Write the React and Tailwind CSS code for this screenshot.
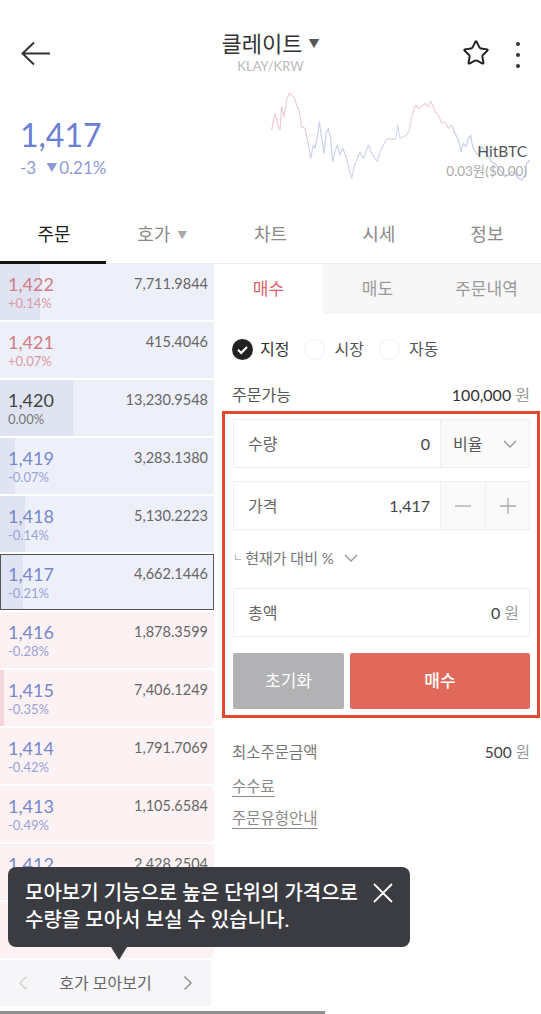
import { Star } from 'lucide-react';

const asks = [
  { price: '1,422', rate: '+0.14%', vol: '7,711.9844', tone: 'up', bar: 40 },
  { price: '1,421', rate: '+0.07%', vol: '415.4046', tone: 'up', bar: 0 },
  { price: '1,420', rate: '0.00%', vol: '13,230.9548', tone: 'flat', bar: 73 },
  { price: '1,419', rate: '-0.07%', vol: '3,283.1380', tone: 'down', bar: 15 },
  { price: '1,418', rate: '-0.14%', vol: '5,130.2223', tone: 'down', bar: 25 },
  { price: '1,417', rate: '-0.21%', vol: '4,662.1446', tone: 'down', bar: 23, current: true },
];

const bids = [
  { price: '1,416', rate: '-0.28%', vol: '1,878.3599', tone: 'down', bar: 0 },
  { price: '1,415', rate: '-0.35%', vol: '7,406.1249', tone: 'down', bar: 4 },
  { price: '1,414', rate: '-0.42%', vol: '1,791.7069', tone: 'down', bar: 0 },
  { price: '1,413', rate: '-0.49%', vol: '1,105.6584', tone: 'down', bar: 0 },
  { price: '1,412', rate: '-0.56%', vol: '2,428.2504', tone: 'down', bar: 0 },
  { price: '1,411', rate: '-0.64%', vol: '986.1120', tone: 'down', bar: 0 },
];

const toneText = {
  up: ['text-[#d27c86]', 'text-[#dc9aa2]'],
  flat: ['text-[#444]', 'text-[#777]'],
  down: ['text-[#7787cc]', 'text-[#97a2d7]'],
};

const chartPoints =
  '35,150 45,100 55,140 60,150 65,80 72,110 80,60 88,40 95,45 103,55 110,75 118,95 125,140 135,145 145,190 152,235 160,195 165,205 172,170 178,125 185,175 192,220 198,160 205,145 212,175 218,245 225,215 232,195 240,225 248,205 258,230 268,270 275,295 283,260 292,235 300,215 310,235 318,215 325,195 335,220 345,235 352,245 360,215 368,200 378,180 388,175 398,178 408,175 413,135 420,175 430,170 440,165 448,150 456,110 462,85 468,75 475,85 485,80 495,70 505,80 512,65 518,75 525,95 535,105 545,130 555,125 565,145 575,135 585,160 595,180 603,215 610,190 618,200 625,175 632,165 638,200 645,215 655,225 665,200 675,215 685,230 695,245 705,250 715,265 725,275 735,290 745,285 755,275 765,280 775,295 785,300 795,285 800,250 810,240';

function Chevron({ className = '' }) {
  return (
    <svg className={className} width="14" height="8" viewBox="0 0 14 8" fill="none">
      <path d="M1 1l6 6 6-6" stroke="currentColor" strokeWidth="1.4" />
    </svg>
  );
}

function BookRow({ row, side }) {
  const bg = side === 'ask' ? 'bg-[#eef0f9]' : 'bg-[#fcf2f3]';
  const barBg = side === 'ask' ? 'bg-[#e0e4f2]' : 'bg-[#f4d6da]';
  const [priceColor, rateColor] = toneText[row.tone];
  return (
    <div className={`relative h-[58px] border-b-2 border-white ${bg}`}>
      {row.bar > 0 && <div className={`absolute left-0 top-0 bottom-0 ${barBg}`} style={{ width: row.bar }} />}
      <div className="relative flex justify-between pl-[8px] pr-[6px] pt-[9px]">
        <div>
          <div className={`text-[18px] leading-[22px] ${priceColor}`}>{row.price}</div>
          <div className={`text-[13px] leading-[16px] ${rateColor}`}>{row.rate}</div>
        </div>
        <div className="text-[14.5px] leading-[22px] text-[#666]">{row.vol}</div>
      </div>
      {row.current && <div className="absolute inset-0 border border-[#555]" />}
    </div>
  );
}

function Field({ label, children, value }) {
  return (
    <div className="flex h-[49px] border border-[#efefef] bg-white">
      <div className="flex flex-1 items-center justify-between pl-[14px] pr-[10px]">
        <span className="text-[16px] text-[#666]">{label}</span>
        {value}
      </div>
      {children}
    </div>
  );
}

export default function App() {
  return (
    <div className="relative h-[1014px] w-[541px] overflow-hidden bg-white font-['Lato','Noto_Sans_CJK_KR',sans-serif] text-[#333]">
      {/* header */}
      <div className="flex h-[90px] items-start justify-between px-[21px]">
        <div className="w-[100px] pt-[41px]">
          <svg width="30" height="25" viewBox="0 0 30 25" fill="none">
            <path d="M1.5 12.5H29M13 1.5L1.5 12.5 13 23.5" stroke="#333" strokeWidth="2" />
          </svg>
        </div>
        <div className="flex flex-col items-center pt-[30px]">
          <div className="flex items-center text-[22px] leading-[28px] text-[#333]">
            클레이트
            <span className="ml-[6px] text-[11px] text-[#555]">▼</span>
          </div>
          <div className="text-[13px] leading-[16px] text-[#bbb]">KLAY/KRW</div>
        </div>
        <div className="flex w-[100px] items-start justify-end gap-[26px] pt-[39px]">
          <Star size={28} strokeWidth={1.7} color="#222" />
          <div className="flex flex-col items-center gap-[7px] pt-[3px]">
            <span className="h-[4px] w-[4px] rounded-full bg-[#333]" />
            <span className="h-[4px] w-[4px] rounded-full bg-[#333]" />
            <span className="h-[4px] w-[4px] rounded-full bg-[#333]" />
          </div>
        </div>
      </div>

      {/* price + chart */}
      <div className="flex h-[110px]">
        <div className="pl-[20px] pt-[25px]">
          <div className="text-[32px] leading-[40px] text-[#6b80d4]">1,417</div>
          <div className="mt-[2px] flex items-center text-[17px] leading-[22px] text-[#8e9ad6]">
            <span>-3</span>
            <span className="ml-[10px] mr-[2px] text-[11px]">▼</span>
            <span>0.21%</span>
          </div>
        </div>
        <div className="relative ml-auto h-[110px] w-[281px]">
          <svg width="281" height="100" viewBox="0 30 843 300" fill="none">
            <defs>
              <linearGradient id="cg" x1="0" y1="0" x2="843" y2="0" gradientUnits="userSpaceOnUse">
                <stop offset="0" stopColor="#f0c6ce" />
                <stop offset="0.15" stopColor="#efccd4" />
                <stop offset="0.19" stopColor="#c8ceec" />
                <stop offset="0.5" stopColor="#d6daf0" />
                <stop offset="0.55" stopColor="#f0cdd4" />
                <stop offset="0.66" stopColor="#eed2d9" />
                <stop offset="0.7" stopColor="#c6cceb" />
                <stop offset="1" stopColor="#c2c8ea" />
              </linearGradient>
            </defs>
            <polyline points={chartPoints} stroke="url(#cg)" strokeWidth="3.5" strokeLinejoin="round" />
          </svg>
          <div className="absolute right-[14px] top-[52px] text-right">
            <div className="text-[15.5px] leading-[19px] text-[#555]">HitBTC</div>
            <div className="mt-[1px] text-[13.5px] leading-[18px] text-[#aaa]">0.03원($0.00)</div>
          </div>
        </div>
      </div>

      {/* main tabs */}
      <div className="grid h-[64px] grid-cols-5 border-b border-[#eeeeee]">
        {['주문', '호가', '차트', '시세', '정보'].map((t, i) => (
          <div key={t} className="relative flex justify-center pt-[22px]">
            <span className={`text-[18px] leading-[24px] ${i === 0 ? 'text-[#222]' : 'text-[#8a8a8a]'}`}>
              {t}
              {i === 1 && <span className="ml-[7px] align-[2px] text-[10px] text-[#aaa]">▼</span>}
            </span>
            {i === 0 && <div className="absolute bottom-[-1px] left-0 h-[3px] w-[106px] bg-[#111]" />}
          </div>
        ))}
      </div>

      {/* body */}
      <div className="flex">
        <div className="w-[214px]">
          {asks.map((r) => (
            <BookRow key={r.price} row={r} side="ask" />
          ))}
          {bids.map((r) => (
            <BookRow key={r.price} row={r} side="bid" />
          ))}
          <div className="flex h-[46px] w-[211px] items-center justify-between bg-[#f6f6f8] px-[18px]">
            <svg width="10" height="16" viewBox="0 0 10 16" fill="none">
              <path d="M8.5 1.5L2 8l6.5 6.5" stroke="#d0d0d0" strokeWidth="1.4" />
            </svg>
            <span className="text-[16px] text-[#666]">호가 모아보기</span>
            <svg width="10" height="16" viewBox="0 0 10 16" fill="none">
              <path d="M1.5 1.5L8 8l-6.5 6.5" stroke="#888" strokeWidth="1.4" />
            </svg>
          </div>
        </div>

        <div className="flex-1">
          <div className="grid h-[50px] grid-cols-3 bg-[#f7f7f8] text-[17px]">
            <div className="flex items-center justify-center bg-white text-[#d9646c]">매수</div>
            <div className="flex items-center justify-center text-[#9a9a9a]">매도</div>
            <div className="flex items-center justify-center text-[#9a9a9a]">주문내역</div>
          </div>

          <div className="mt-[25px] flex h-[20px] items-center pl-[18px] text-[16px]">
            <svg width="21" height="21" viewBox="0 0 21 21">
              <circle cx="10.5" cy="10.5" r="10.5" fill="#222" />
              <path d="M6 10.8l3.2 3.2 5.8-6" stroke="#fff" strokeWidth="2" fill="none" />
            </svg>
            <span className="ml-[7px] text-[#333]">지정</span>
            <span className="ml-[15px] h-[21px] w-[21px] rounded-full border border-[#f1f1f1]" />
            <span className="ml-[9px] text-[#555]">시장</span>
            <span className="ml-[15px] h-[21px] w-[21px] rounded-full border border-[#f1f1f1]" />
            <span className="ml-[9px] text-[#555]">자동</span>
          </div>

          <div className="mt-[25px] flex h-[22px] items-center justify-between pl-[18px] pr-[11px] text-[16px]">
            <span className="text-[#555]">주문가능</span>
            <span className="text-[#333]">
              100,000 <span className="text-[#999]">원</span>
            </span>
          </div>

          <div className="ml-[8px] mr-[1px] mt-[5px] border-[3px] border-[#e4472f] pb-[6px] pl-[8px] pr-[7px] pt-[5px]">
            <Field label="수량" value={<span className="text-[16px] text-[#444]">0</span>}>
              <div className="flex w-[89px] items-center justify-between border-l border-[#efefef] bg-[#fafafa] pl-[12px] pr-[12px]">
                <span className="text-[16px] text-[#555]">비율</span>
                <Chevron className="text-[#999]" />
              </div>
            </Field>

            <div className="mt-[13px]">
              <Field label="가격" value={<span className="text-[16px] text-[#444]">1,417</span>}>
                <div className="flex w-[45px] items-center justify-center border-l border-[#efefef] bg-[#fafafa]">
                  <svg width="16" height="2" viewBox="0 0 16 2">
                    <path d="M0 1h16" stroke="#aaa" strokeWidth="1.3" />
                  </svg>
                </div>
                <div className="flex w-[44px] items-center justify-center border-l border-[#efefef] bg-[#fafafa]">
                  <svg width="16" height="16" viewBox="0 0 16 16">
                    <path d="M0 8h16M8 0v16" stroke="#aaa" strokeWidth="1.3" />
                  </svg>
                </div>
              </Field>
            </div>

            <div className="mt-[18px] flex h-[20px] items-center text-[15px] text-[#777]">
              <span className="mr-[2px] text-[11px] text-[#aaa]">ㄴ</span>
              현재가 대비 %
              <Chevron className="ml-[10px] text-[#999]" />
            </div>

            <div className="mt-[20px]">
              <Field
                label="총액"
                value={
                  <span className="text-[16px] text-[#444]">
                    0 <span className="text-[#999]">원</span>
                  </span>
                }
              />
            </div>

            <div className="mt-[16px] flex h-[56px] gap-[6px]">
              <div className="flex w-[111px] items-center justify-center rounded-[2px] bg-[#b2b2b4] text-[17px] text-white">
                초기화
              </div>
              <div className="flex flex-1 items-center justify-center rounded-[2px] bg-[#e0695c] text-[17px] font-medium text-white">
                매수
              </div>
            </div>
          </div>

          <div className="mt-[24px] flex h-[22px] items-center justify-between pl-[18px] pr-[11px] text-[15.5px]">
            <span className="text-[#777]">최소주문금액</span>
            <span className="text-[#444]">
              500 <span className="text-[#999]">원</span>
            </span>
          </div>
          <div className="mt-[11px] pl-[18px] text-[15.5px] leading-[22px] text-[#888] underline underline-offset-4">수수료</div>
          <div className="mt-[10px] pl-[18px] text-[15.5px] leading-[22px] text-[#888] underline underline-offset-4">주문유형안내</div>
        </div>
      </div>

      {/* tooltip */}
      <div className="absolute left-[8px] top-[867px] h-[80px] w-[402px] rounded-[8px] bg-[#3a3c41] pl-[17px] pt-[12px]">
        <div className="text-[20px] font-medium leading-[27px] text-white">
          <div>모아보기 기능으로 높은 단위의 가격으로</div>
          <div>수량을 모아서 보실 수 있습니다.</div>
        </div>
        <svg className="absolute right-[17px] top-[16px]" width="20" height="20" viewBox="0 0 20 20">
          <path d="M1 1l18 18M19 1L1 19" stroke="#fff" strokeWidth="1.8" />
        </svg>
        <div className="absolute left-[103px] top-[80px] h-0 w-0 border-l-[8px] border-r-[8px] border-t-[13px] border-l-transparent border-r-transparent border-t-[#3a3c41]" />
      </div>

      {/* video scrubber */}
      <div className="absolute bottom-0 left-0 h-[3px] w-[325px] bg-[#8e8e8e]" />
    </div>
  );
}
